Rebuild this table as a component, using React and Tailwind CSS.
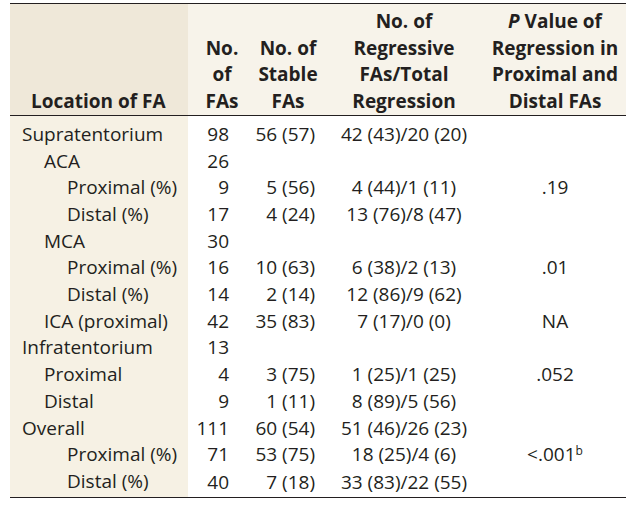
const rows = [
  { label: 'Supratentorium', lvl: 0, n: '98', stable: '56 (57)', reg: '42 (43)/20 (20)', p: '' },
  { label: 'ACA', lvl: 1, n: '26', stable: '', reg: '', p: '' },
  { label: 'Proximal (%)', lvl: 2, n: '9', stable: '5 (56)', reg: '4 (44)/1 (11)', p: '.19' },
  { label: 'Distal (%)', lvl: 2, n: '17', stable: '4 (24)', reg: '13 (76)/8 (47)', p: '' },
  { label: 'MCA', lvl: 1, n: '30', stable: '', reg: '', p: '' },
  { label: 'Proximal (%)', lvl: 2, n: '16', stable: '10 (63)', reg: '6 (38)/2 (13)', p: '.01' },
  { label: 'Distal (%)', lvl: 2, n: '14', stable: '2 (14)', reg: '12 (86)/9 (62)', p: '' },
  { label: 'ICA (proximal)', lvl: 1, n: '42', stable: '35 (83)', reg: '7 (17)/0 (0)', p: 'NA' },
  { label: 'Infratentorium', lvl: 0, n: '13', stable: '', reg: '', p: '' },
  { label: 'Proximal', lvl: 1, n: '4', stable: '3 (75)', reg: '1 (25)/1 (25)', p: '.052' },
  { label: 'Distal', lvl: 1, n: '9', stable: '1 (11)', reg: '8 (89)/5 (56)', p: '' },
  { label: 'Overall', lvl: 0, n: '111', stable: '60 (54)', reg: '51 (46)/26 (23)', p: '' },
  { label: 'Proximal (%)', lvl: 2, n: '71', stable: '53 (75)', reg: '18 (25)/4 (6)', p: 'sup' },
  { label: 'Distal (%)', lvl: 2, n: '40', stable: '7 (18)', reg: '33 (83)/22 (55)', p: '' },
]

const indent = ['pl-[12px]', 'pl-[34px]', 'pl-[57px]']

export default function App() {
  return (
    <div className="w-[636px] h-[505px] bg-white text-[#231f20] overflow-hidden" style={{ fontFamily: '"Open Sans", sans-serif' }}>
      <div className="pt-[3px] px-[10px]">
        <table className="w-[616px] border-collapse table-fixed text-[19px] leading-[26.7px]">
          <colgroup>
            <col className="w-[178px]" />
            <col className="w-[64px]" />
            <col className="w-[72px]" />
            <col className="w-[160px]" />
            <col className="w-[142px]" />
          </colgroup>
          <thead>
            <tr className="border-t-[1.5px] border-b-[1.5px] border-[#231f20] align-bottom">
              <th className="bg-[#efe8d9] text-left pl-[21px] pt-[4px] font-bold">Location of FA</th>
              <th className="bg-[#f7f3ea] text-center pl-[4px] font-bold">No.<br />of<br />FAs</th>
              <th className="bg-[#f7f3ea] text-center font-bold">No. of<br />Stable<br />FAs</th>
              <th className="bg-[#f7f3ea] text-center font-bold">No. of<br />Regressive<br />FAs/Total<br />Regression</th>
              <th className="bg-[#f7f3ea] text-center font-bold pt-[4px]"><i>P</i> Value of<br />Regression in<br />Proximal and<br />Distal FAs</th>
            </tr>
          </thead>
          <tbody className="border-b-[1.5px] border-[#231f20] font-medium">
            {rows.map((r, i) => (
              <tr key={i}>
                <td className={`bg-[#f6f1e4] whitespace-nowrap ${indent[r.lvl]} ${i === 0 ? 'pt-[5px]' : ''} ${i === rows.length - 1 ? 'pb-[2px]' : ''}`}>{r.label}</td>
                <td className={`text-right pr-[23px] ${i === 0 ? 'pt-[5px]' : ''}`}>{r.n}</td>
                <td className={`text-right pr-[9px] whitespace-nowrap ${i === 0 ? 'pt-[5px]' : ''}`}>{r.stable}</td>
                <td className={`text-center whitespace-nowrap ${i === 0 ? 'pt-[5px]' : ''}`}>{r.reg}</td>
                <td className={`text-center whitespace-nowrap ${i === 0 ? 'pt-[5px]' : ''}`}>
                  {r.p === 'sup' ? (<span>&lt;.001<sup className="text-[12px]">b</sup></span>) : r.p}
                </td>
              </tr>
            ))}
          </tbody>
        </table>
      </div>
    </div>
  )
}
